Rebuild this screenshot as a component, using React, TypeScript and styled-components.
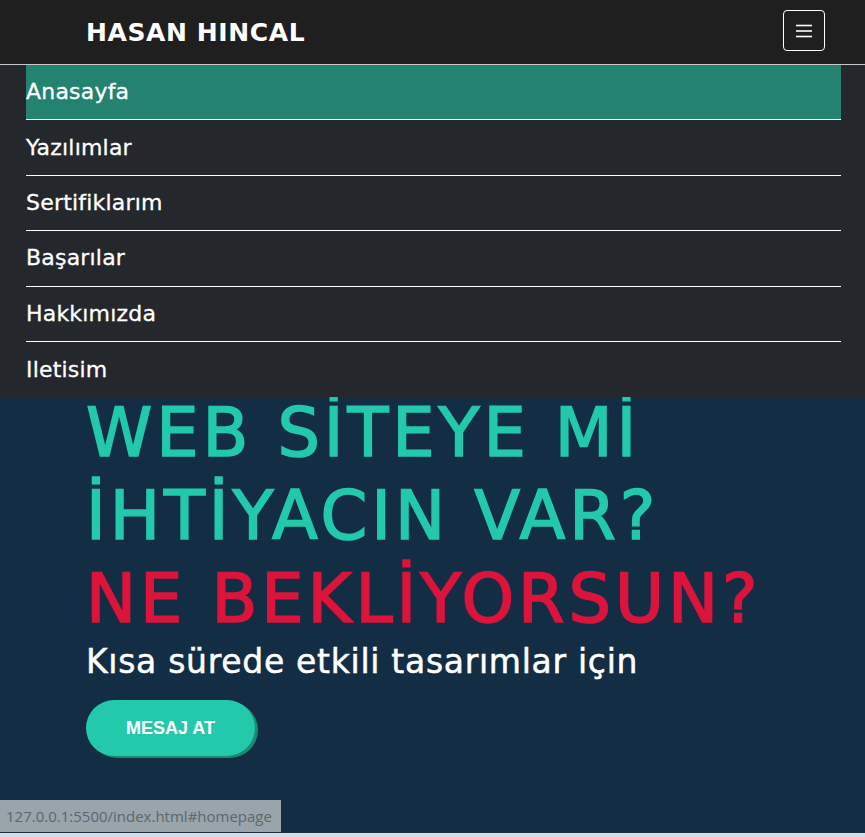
import React from "react";
import styled, { createGlobalStyle } from "styled-components";

const GlobalStyle = createGlobalStyle`
  html, body {
    margin: 0;
    padding: 0;
    background: #d5dde3;
  }
  * { box-sizing: border-box; }
`;

const Page = styled.div`
  position: relative;
  width: 100%;
  font-family: "DejaVu Sans", "Noto Sans", sans-serif;
`;

const NavBar = styled.header`
  height: 65px;
  background: #201f20;
  border-bottom: 1px solid #c6c6c6;
  display: flex;
  align-items: center;
  justify-content: space-between;
  padding: 0 40px 0 86px;
`;

const Brand = styled.a`
  color: #ffffff;
  font-family: "DejaVu Sans", sans-serif;
  font-weight: 700;
  font-size: 25px;
  letter-spacing: 0.6px;
  text-decoration: none;
  margin-top: 1px;
`;

const Toggler = styled.button`
  width: 42px;
  height: 41px;
  margin-top: -3px;
  border: 1px solid #ffffff;
  border-radius: 4px;
  background: transparent;
  display: flex;
  align-items: center;
  justify-content: center;
  padding: 0;
`;

const Menu = styled.nav`
  position: absolute;
  top: 65px;
  left: 0;
  right: 0;
  background: #24282c;
  padding: 0 24px 0 26px;
  z-index: 2;
`;

const MenuItem = styled.a<{ $active?: boolean; $last?: boolean }>`
  display: flex;
  align-items: center;
  height: 55.4px;
  color: #ffffff;
  font-size: 22px;
  letter-spacing: 0.2px;
  -webkit-text-stroke: 0.3px currentColor;
  text-decoration: none;
  background: ${(p) => (p.$active ? "#248271" : "transparent")};
  border-bottom: ${(p) => (p.$last ? "none" : "1px solid #ffffff")};
  padding-bottom: 1px;
`;

const Hero = styled.section`
  height: 768px;
  background: #132d45;
  padding: 327px 0 0 86px;
`;

const Headline = styled.h1`
  margin: 0;
  font-family: "DejaVu Sans", sans-serif;
  font-weight: 400;
  font-size: 67px;
  line-height: 83px;
  letter-spacing: 3.9px;
  -webkit-text-stroke: 1.6px currentColor;
`;

const HeadLine = styled.span<{ $color: string }>`
  display: block;
  color: ${(p) => p.$color};
`;

const Subtitle = styled.p`
  margin: 2px 0 0;
  color: #ffffff;
  font-size: 33px;
  line-height: 38px;
  letter-spacing: 0.7px;
  -webkit-text-stroke: 0.5px currentColor;
`;

const CtaButton = styled.button`
  margin-top: 19px;
  height: 56px;
  width: 169px;
  border: none;
  border-radius: 28px;
  background: #22c9ab;
  box-shadow: 3px 2px 0 #1b8a72;
  color: #ffffff;
  font-family: "Liberation Sans", Arial, sans-serif;
  font-weight: 700;
  font-size: 18px;
  cursor: pointer;
`;

const StatusBar = styled.div`
  position: absolute;
  left: 0;
  top: 800px;
  height: 32px;
  padding: 0 9px 0 6px;
  display: flex;
  align-items: center;
  background: #99a4ab;
  color: #5d676d;
  font-family: "Open Sans", "Noto Sans", sans-serif;
  font-size: 15px;
  z-index: 3;
`;

const HamburgerIcon = () => (
  <svg width="18" height="14" viewBox="0 0 18 14" aria-hidden="true">
    <g stroke="#ffffff" strokeWidth="1.6" strokeLinecap="butt">
      <line x1="1" y1="1.5" x2="17" y2="1.5" />
      <line x1="1" y1="7" x2="17" y2="7" />
      <line x1="1" y1="12.5" x2="17" y2="12.5" />
    </g>
  </svg>
);

const items = [
  "Anasayfa",
  "Yazılımlar",
  "Sertifiklarım",
  "Başarılar",
  "Hakkımızda",
  "Iletisim",
];

export default function App() {
  return (
    <Page>
      <GlobalStyle />
      <NavBar>
        <Brand href="#homepage">HASAN HINCAL</Brand>
        <Toggler aria-label="Menü">
          <HamburgerIcon />
        </Toggler>
      </NavBar>
      <Menu>
        {items.map((item, i) => (
          <MenuItem
            key={item}
            href="#"
            $active={i === 0}
            $last={i === items.length - 1}
          >
            {item}
          </MenuItem>
        ))}
      </Menu>
      <Hero>
        <Headline>
          <HeadLine $color="#22c9ab">WEB SİTEYE Mİ</HeadLine>
          <HeadLine $color="#22c9ab">İHTİYACIN VAR?</HeadLine>
          <HeadLine $color="#dc143c">NE BEKLİYORSUN?</HeadLine>
        </Headline>
        <Subtitle>Kısa sürede etkili tasarımlar için</Subtitle>
        <CtaButton>MESAJ AT</CtaButton>
      </Hero>
      <StatusBar>127.0.0.1:5500/index.html#homepage</StatusBar>
    </Page>
  );
}
